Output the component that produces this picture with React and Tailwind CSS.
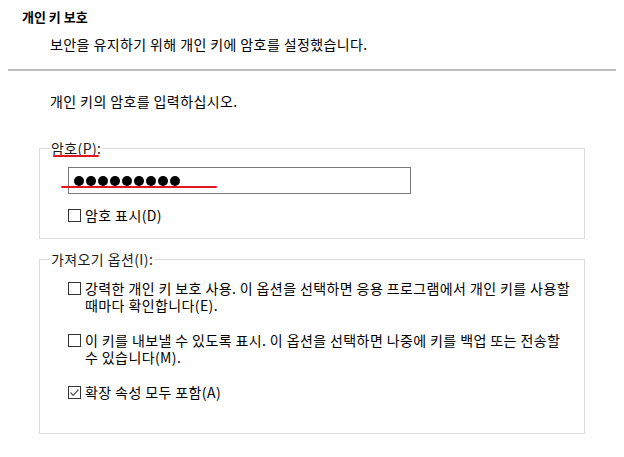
const font = { fontFamily: '"Noto Sans CJK KR", "Noto Sans", sans-serif' }

function Check({ checked }) {
  return (
    <span className="mt-[2px] flex h-[13px] w-[13px] shrink-0 items-center justify-center border border-[#333333] bg-white">
      {checked && (
        <svg width="11" height="11" viewBox="0 0 11 11">
          <path d="M1.5 5.5 L4.2 8.3 L9.5 2.5" fill="none" stroke="#555" strokeWidth="1.2" />
        </svg>
      )}
    </span>
  )
}

function Option({ checked, children }) {
  return (
    <div className="flex items-start gap-[4px]">
      <Check checked={checked} />
      <span className="whitespace-nowrap leading-[17px]">{children}</span>
    </div>
  )
}

export default function App() {
  return (
    <div
      className="h-[457px] w-[624px] overflow-hidden bg-white text-[14px] tracking-[0.4px] text-black"
      style={font}
    >
      <div className="pl-[22px] pt-[9px] text-[13px] font-bold leading-[16px] tracking-normal">개인 키 보호</div>
      <div className="pl-[50px] pt-[11px] leading-[17px]">보안을 유지하기 위해 개인 키에 암호를 설정했습니다.</div>
      <div className="mx-[8px] mt-[16px] border-t-2 border-[#bdbdbd]" />

      <div className="pl-[50px] pt-[22px] leading-[17px]">개인 키의 암호를 입력하십시오.</div>

      <fieldset className="mx-[39px] mt-[30px] border border-[#dcdcdc] px-[10px] pb-[14px] pt-[10px]">
        <legend className="relative px-[1px] leading-[17px] text-[#1a1a1a]">
          암호(P):
          <span className="absolute left-[3px] top-[15px] h-[2px] w-[46px] rounded-full bg-[#e0171f]" />
        </legend>
        <div className="pl-[18px]">
          <div className="relative flex h-[27px] w-[343px] items-center gap-[2px] border border-[#7a7a7a] pl-[5px]">
            {Array.from({ length: 9 }).map((_, i) => (
              <span key={i} className="h-[10px] w-[10px] rounded-full bg-black" />
            ))}
            <span className="absolute left-[-8px] top-[18px] h-[2px] w-[156px] rounded-full bg-[#e0171f]" />
          </div>
          <div className="mt-[13px]">
            <Option>암호 표시(D)</Option>
          </div>
        </div>
      </fieldset>

      <fieldset className="mx-[39px] mt-[12px] border border-[#dcdcdc] px-[10px] pb-[32px] pt-[12px]">
        <legend className="px-[1px] leading-[17px] text-[#1a1a1a]">가져오기 옵션(I):</legend>
        <div className="flex flex-col gap-[18px] pl-[18px]">
          <Option>
            강력한 개인 키 보호 사용. 이 옵션을 선택하면 응용 프로그램에서 개인 키를 사용할
            <br />
            때마다 확인합니다(E).
          </Option>
          <Option>
            이 키를 내보낼 수 있도록 표시. 이 옵션을 선택하면 나중에 키를 백업 또는 전송할
            <br />
            수 있습니다(M).
          </Option>
          <Option checked>확장 속성 모두 포함(A)</Option>
        </div>
      </fieldset>
    </div>
  )
}
